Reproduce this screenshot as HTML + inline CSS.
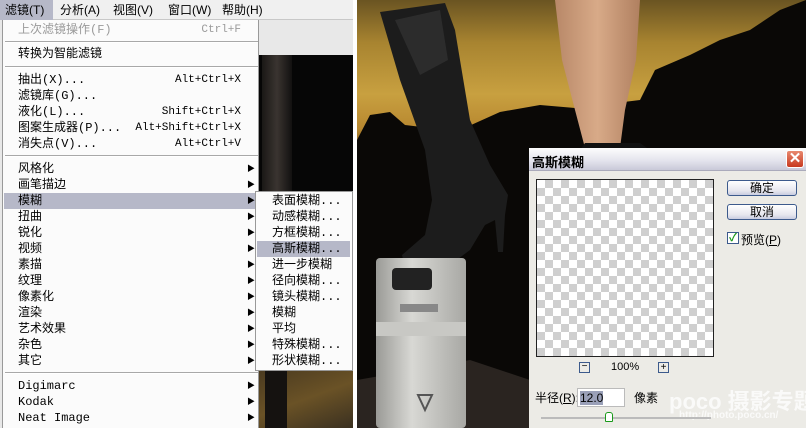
<!DOCTYPE html>
<html><head><meta charset="utf-8"><style>
*{margin:0;padding:0;box-sizing:border-box}
body{width:806px;height:428px;overflow:hidden;position:relative;background:#fff;font-family:"Liberation Sans","Noto Sans CJK SC","WenQuanYi Zen Hei",sans-serif;font-size:12px;color:#000}
.abs{position:absolute}
#left{left:0;top:0;width:353px;height:428px;background:#e8e8e8;overflow:hidden}
#bar{left:0;top:0;width:353px;height:20px;background:#f0f0f0;border-bottom:1px solid #c8c8c8}
#bar span{position:absolute;top:2px;font-size:12px;line-height:16px}
#menu{left:2px;top:20px;width:257px;height:410px;background:#fbfbfb;border:1px solid #999;border-top:none}
.it{position:absolute;left:15px;font-size:12px;line-height:16px;white-space:nowrap;font-family:"Liberation Mono","Noto Sans CJK SC",monospace}
.sc{position:absolute;right:17px;font-size:11px;line-height:16px;font-family:"Liberation Mono",monospace}
.ar{position:absolute;left:244px;font-size:8px;line-height:16px}
.sep{position:absolute;left:2px;width:253px;height:0;border-top:1px solid #a8a8a8;border-bottom:1px solid #fff}
#sub{left:255px;top:191px;width:98px;height:180px;background:#fbfbfb;border:1px solid #999}
#sub .it{left:16px}
#dlg{left:529px;top:148px;width:277px;height:280px;background:#ecebe6;overflow:hidden}
#title{left:0;top:0;width:277px;height:23px;background:linear-gradient(#fdfdfd,#e2e2ec 60%,#c9c9d8);border-bottom:1px solid #aab}
.btn{position:absolute;width:70px;height:16px;border:1px solid #3c5a8c;border-radius:3px;background:linear-gradient(#fff,#e6e6ee 70%,#c8cce0);text-align:center;font-size:12px;line-height:14px}
#chk{background-color:#fff;background-image:linear-gradient(45deg,#cfcfcf 25%,transparent 25%,transparent 75%,#cfcfcf 75%),linear-gradient(45deg,#cfcfcf 25%,transparent 25%,transparent 75%,#cfcfcf 75%);background-size:16px 16px;background-position:0 0,8px 8px}
</style></head><body>
<div id="left" class="abs">
  <div class="abs" style="left:259px;top:55px;width:94px;height:373px;background:#060606"></div>
  <div class="abs" style="left:262px;top:55px;width:30px;height:320px;background:linear-gradient(90deg,#1a1816,#3a3430,#121110)"></div>
  <div class="abs" style="left:259px;top:370px;width:94px;height:58px;background:linear-gradient(160deg,#4a3a20,#6a5226 50%,#3a3020)"></div>
  <div class="abs" style="left:265px;top:370px;width:22px;height:58px;background:#151210"></div>
  <div id="bar" class="abs">
    <div class="abs" style="left:0;top:0;width:53px;height:20px;background:#b6b8c8"></div>
    <span style="left:5px">滤镜(T)</span>
    <span style="left:60px">分析(A)</span>
    <span style="left:113px">视图(V)</span>
    <span style="left:168px">窗口(W)</span>
    <span style="left:222px">帮助(H)</span>
  </div>
  <div id="menu" class="abs">
    <div class="it" style="top:2px;color:#9a9a9a">上次滤镜操作(F)</div><div class="sc" style="top:2px;color:#9a9a9a">Ctrl+F</div>
    <div class="sep" style="top:21px"></div>
    <div class="it" style="top:26px">转换为智能滤镜</div>
    <div class="sep" style="top:46px"></div>
    <div class="it" style="top:52px">抽出(X)...</div><div class="sc" style="top:52px">Alt+Ctrl+X</div>
    <div class="it" style="top:68px">滤镜库(G)...</div>
    <div class="it" style="top:84px">液化(L)...</div><div class="sc" style="top:84px">Shift+Ctrl+X</div>
    <div class="it" style="top:100px">图案生成器(P)...</div><div class="sc" style="top:100px">Alt+Shift+Ctrl+X</div>
    <div class="it" style="top:116px">消失点(V)...</div><div class="sc" style="top:116px">Alt+Ctrl+V</div>
    <div class="sep" style="top:135px"></div>
    <div class="abs" style="left:1px;top:173px;width:253px;height:16px;background:#b6b8c8"></div>
    <div class="it" style="top:141px">风格化</div><div class="ar" style="top:141px">▶</div>
    <div class="it" style="top:157px">画笔描边</div><div class="ar" style="top:157px">▶</div>
    <div class="it" style="top:173px">模糊</div><div class="ar" style="top:173px">▶</div>
    <div class="it" style="top:189px">扭曲</div><div class="ar" style="top:189px">▶</div>
    <div class="it" style="top:205px">锐化</div><div class="ar" style="top:205px">▶</div>
    <div class="it" style="top:221px">视频</div><div class="ar" style="top:221px">▶</div>
    <div class="it" style="top:237px">素描</div><div class="ar" style="top:237px">▶</div>
    <div class="it" style="top:253px">纹理</div><div class="ar" style="top:253px">▶</div>
    <div class="it" style="top:269px">像素化</div><div class="ar" style="top:269px">▶</div>
    <div class="it" style="top:285px">渲染</div><div class="ar" style="top:285px">▶</div>
    <div class="it" style="top:301px">艺术效果</div><div class="ar" style="top:301px">▶</div>
    <div class="it" style="top:317px">杂色</div><div class="ar" style="top:317px">▶</div>
    <div class="it" style="top:333px">其它</div><div class="ar" style="top:333px">▶</div>
    <div class="sep" style="top:352px"></div>
    <div class="it" style="top:358px">Digimarc</div><div class="ar" style="top:358px">▶</div>
    <div class="it" style="top:374px">Kodak</div><div class="ar" style="top:374px">▶</div>
    <div class="it" style="top:390px">Neat Image</div><div class="ar" style="top:390px">▶</div>
  </div>
  <div id="sub" class="abs">
    <div class="abs" style="left:1px;top:49px;width:93px;height:16px;background:#b6b8c8"></div>
    <div class="it" style="top:1px">表面模糊...</div>
    <div class="it" style="top:17px">动感模糊...</div>
    <div class="it" style="top:33px">方框模糊...</div>
    <div class="it" style="top:49px">高斯模糊...</div>
    <div class="it" style="top:65px">进一步模糊</div>
    <div class="it" style="top:81px">径向模糊...</div>
    <div class="it" style="top:97px">镜头模糊...</div>
    <div class="it" style="top:113px">模糊</div>
    <div class="it" style="top:129px">平均</div>
    <div class="it" style="top:145px">特殊模糊...</div>
    <div class="it" style="top:161px">形状模糊...</div>
  </div>
</div>
<svg class="abs" style="left:357px;top:0" width="449" height="428" viewBox="357 0 449 428">
  <defs>
    <linearGradient id="sky" x1="0" y1="0" x2="0" y2="1">
      <stop offset="0" stop-color="#6a5422"/><stop offset="0.1" stop-color="#a88430"/>
      <stop offset="0.22" stop-color="#c8a040"/><stop offset="0.3" stop-color="#b88830"/>
      <stop offset="0.38" stop-color="#5a4018"/><stop offset="0.5" stop-color="#0e0a06"/><stop offset="1" stop-color="#050403"/>
    </linearGradient>
    <linearGradient id="suit" x1="0" y1="0" x2="1" y2="0">
      <stop offset="0" stop-color="#9a9a96"/><stop offset="0.4" stop-color="#d8d8d4"/><stop offset="1" stop-color="#a8a8a4"/>
    </linearGradient>
    <linearGradient id="leg" x1="0" y1="0" x2="1" y2="0">
      <stop offset="0" stop-color="#b88868"/><stop offset="0.5" stop-color="#d8aa88"/><stop offset="1" stop-color="#b08060"/>
    </linearGradient>
  </defs>
  <rect x="357" y="0" width="449" height="428" fill="url(#sky)"/>
  <path d="M357 140 L370 115 L390 112 L405 125 L430 128 L460 130 L500 112 L540 105 L575 108 L640 100 L655 70 L690 55 L720 40 L750 30 L780 10 L806 0 L806 428 L357 428Z" fill="#0a0806"/>
  <path d="M357 380 L470 360 L530 380 L530 428 L357 428Z" fill="#2a2420"/>
  <path d="M555 0 L640 0 L636 60 L625 110 L620 148 L585 148 L575 110 L562 60Z" fill="url(#leg)"/>
  <path d="M585 143 L640 143 L650 150 L580 150Z" fill="#111"/>
  <path d="M380 12 L445 3 L455 30 L470 120 L490 165 L508 195 L505 215 L503 252 L498 252 L495 220 L485 225 L470 250 L450 265 L405 268 L402 255 L425 235 L432 200 L425 150 L400 80Z" fill="#1c1c1c"/>
  <path d="M395 20 L440 10 L448 60 L420 75Z" fill="#2c2c2c"/>
  <rect x="376" y="258" width="90" height="170" rx="4" fill="url(#suit)"/>
  <rect x="392" y="268" width="40" height="22" rx="4" fill="#222"/>
  <rect x="400" y="304" width="38" height="8" fill="#888"/>
  <rect x="376" y="322" width="90" height="14" fill="#c8c8c4"/>
  <path d="M418 395 L432 395 L425 410Z" fill="none" stroke="#555" stroke-width="2"/>
</svg>
<div id="dlg" class="abs">
  <div id="title" class="abs"><span class="abs" style="left:3px;top:4px;font-size:13px;font-weight:bold">高斯模糊</span>
    <div class="abs" style="left:257px;top:2px;width:18px;height:18px;border-radius:3px;background:linear-gradient(#e88a70,#c83a20);border:1px solid #fff;color:#fff;text-align:center;font-size:15px;line-height:16px;font-weight:bold">✕</div>
  </div>
  <div id="chk" class="abs" style="left:7px;top:31px;width:178px;height:178px;border:1px solid #222"></div>
  <div class="btn" style="left:198px;top:32px">确定</div>
  <div class="btn" style="left:198px;top:56px">取消</div>
  <div class="abs" style="left:198px;top:84px;width:12px;height:12px;border:1px solid #3c5a8c;background:#fff;color:#1a9a1a;font-size:11px;line-height:10px;text-align:center;font-weight:bold">✓</div>
  <span class="abs" style="left:212px;top:83px">预览(<u>P</u>)</span>
  <div class="abs" style="left:50px;top:214px;width:11px;height:11px;border:1px solid #3c5a8c;font-size:10px;line-height:8px;text-align:center">−</div>
  <span class="abs" style="left:82px;top:213px;font-size:11px">100%</span>
  <div class="abs" style="left:129px;top:214px;width:11px;height:11px;border:1px solid #3c5a8c;font-size:10px;line-height:9px;text-align:center">+</div>
  <span class="abs" style="left:6px;top:241px">半径(<u>R</u>):</span>
  <div class="abs" style="left:48px;top:240px;width:48px;height:19px;background:#fff;border:1px solid #bbb"><span style="background:#9aa0b8;margin:2px;display:inline-block;line-height:14px">12.0</span></div>
  <span class="abs" style="left:105px;top:241px">像素</span>
  <span class="abs" style="left:140px;top:236px;font-size:22px;color:rgba(255,255,255,.75);font-weight:bold;white-space:nowrap">poco 摄影专题</span>
  <span class="abs" style="left:150px;top:262px;font-size:10px;color:rgba(255,255,255,.75);font-weight:bold;white-space:nowrap">http://photo.poco.cn/</span>
  <div class="abs" style="left:12px;top:269px;width:170px;height:2px;background:#bbb"></div>
  <div class="abs" style="left:76px;top:264px;width:8px;height:10px;background:#fff;border:1px solid #1a9a1a;border-radius:3px 3px 1px 1px"></div>
</div>
</body></html>
